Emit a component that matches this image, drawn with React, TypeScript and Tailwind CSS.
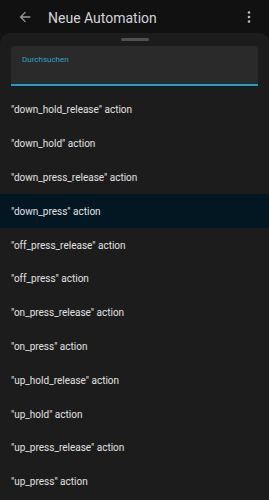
import React from "react";

const items = [
  "\"down_hold_release\" action",
  "\"down_hold\" action",
  "\"down_press_release\" action",
  "\"down_press\" action",
  "\"off_press_release\" action",
  "\"off_press\" action",
  "\"on_press_release\" action",
  "\"on_press\" action",
  "\"up_hold_release\" action",
  "\"up_hold\" action",
  "\"up_press_release\" action",
  "\"up_press\" action",
];

export default function App() {
  return (
    <div className="w-[269px] h-[500px] overflow-hidden bg-[#111111] flex flex-col" style={{ fontFamily: "Roboto, 'Noto Sans', sans-serif" }}>
      <div className="h-[33px] shrink-0 flex items-center pl-[17px] pr-[18px]">
        <svg width="16" height="16" viewBox="0 0 24 24" className="text-[#9a9a9a]">
          <path d="M20 11H7.83l5.59-5.59L12 4l-8 8 8 8 1.41-1.41L7.83 13H20v-2z" fill="currentColor" />
        </svg>
        <div className="ml-[15px] text-[14px] text-[#d4d4d4] leading-none flex-1 mt-[2px]">Neue Automation</div>
        <svg width="4" height="12" viewBox="0 0 4 12" className="text-[#bdbdbd]">
          <circle cx="2" cy="1.5" r="1.3" fill="currentColor" />
          <circle cx="2" cy="6" r="1.3" fill="currentColor" />
          <circle cx="2" cy="10.5" r="1.3" fill="currentColor" />
        </svg>
      </div>
      <div className="flex-1 bg-[#1c1c1c] rounded-t-[10px] flex flex-col">
        <div className="flex justify-center pt-[5px]">
          <div className="w-[28px] h-[3px] rounded-full bg-[#505050]" />
        </div>
        <div className="mx-[11px] mt-[5px] h-[40px] bg-[#2a2a2a] rounded-t-[4px] border-b-2 border-[#1d9fc2] px-[11px] pt-[10px]">
          <div className="text-[8px] text-[#2aa3c4] leading-none">Durchsuchen</div>
        </div>
        <div className="flex flex-col mt-[7px]">
          {items.map((t, i) => (
            <div
              key={t}
              className={`h-[33.8px] flex items-center px-[11px] text-[10px] text-[#e2e2e2] ${i === 3 ? "bg-[#021722]" : ""}`}
            >
              {t}
            </div>
          ))}
        </div>
      </div>
    </div>
  );
}
